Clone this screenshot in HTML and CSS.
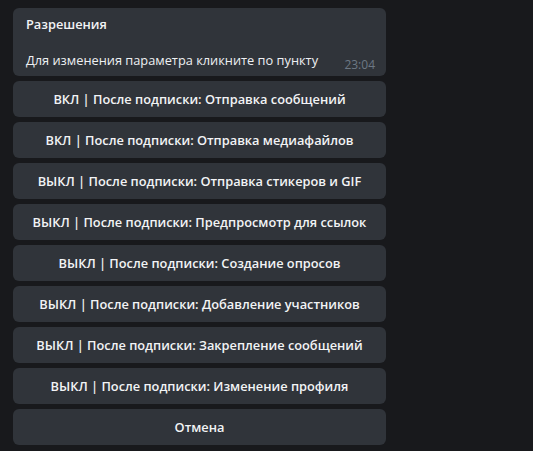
FILE: index.html
```html
<!DOCTYPE html>
<html lang="ru">
<head>
<meta charset="utf-8">
<link rel="stylesheet" href="styles.css">
</head>
<body>
<div class="chat">
  <div class="bubble">
    <div class="title">Разрешения</div>
    <div class="blank"></div>
    <div class="line">
      <span class="text">Для изменения параметра кликните по пункту</span>
      <span class="time">23:04</span>
    </div>
  </div>
  <div class="keyboard">
    <button class="kb">ВКЛ | После подписки: Отправка сообщений</button>
    <button class="kb">ВКЛ | После подписки: Отправка медиафайлов</button>
    <button class="kb">ВЫКЛ | После подписки: Отправка стикеров и GIF</button>
    <button class="kb">ВЫКЛ | После подписки: Предпросмотр для ссылок</button>
    <button class="kb">ВЫКЛ | После подписки: Создание опросов</button>
    <button class="kb">ВЫКЛ | После подписки: Добавление участников</button>
    <button class="kb">ВЫКЛ | После подписки: Закрепление сообщений</button>
    <button class="kb">ВЫКЛ | После подписки: Изменение профиля</button>
    <button class="kb">Отмена</button>
  </div>
</div>
</body>
</html>
```
FILE: styles.css
```css
html, body {
  margin: 0;
  padding: 0;
  background: #18191c;
  height: 100%;
}
body {
  font-family: "Open Sans", "Liberation Sans", sans-serif;
  font-size: 12.8px;
  color: #f2f3f5;
}
.chat {
  width: 373px;
  padding: 8px 0 0 13px;
  display: flex;
  flex-direction: column;
}
.bubble {
  background: #30343a;
  border-radius: 6px;
  padding: 7px 11px 6px 13px;
  line-height: 18px;
}
.title {
  font-weight: 600;
}
.blank {
  height: 18px;
}
.line {
  display: flex;
  align-items: baseline;
  justify-content: space-between;
}
.text {
  color: #eef0f2;
}
.time {
  font-size: 12px;
  color: #6d7884;
  position: relative;
  top: 4px;
}
.keyboard {
  display: flex;
  flex-direction: column;
  gap: 5px;
  margin-top: 5px;
}
.kb {
  height: 36px;
  border: none;
  border-radius: 6px;
  background: #30343a;
  color: #f2f3f5;
  font-family: "Open Sans", "Liberation Sans", sans-serif;
  font-size: 12.8px;
  font-weight: 600;
  padding: 0;
  text-align: center;
}
```
